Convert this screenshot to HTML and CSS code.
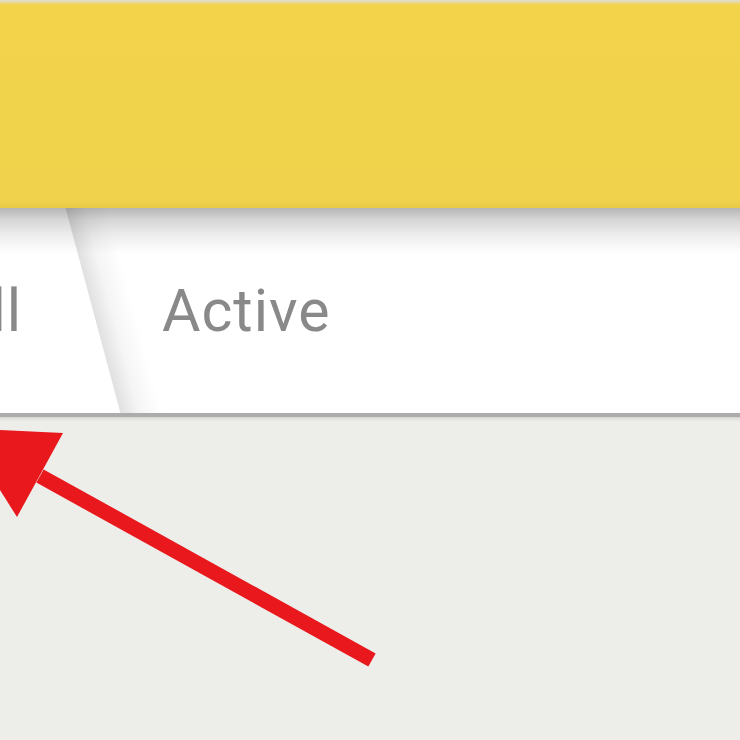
FILE: index.html
```html
<!DOCTYPE html>
<html lang="en">
  <head>
    <meta charset="UTF-8">
    <title>Tasks</title>
    <meta name="viewport" content="width=device-width, initial-scale=1">
    <link rel="stylesheet" href="styles.css">
  </head>
  <body>
    <header class="toolbar"></header>

    <nav class="tabs">
      <div class="tab tab-all">All</div>
      <div class="tab tab-active">Active</div>
    </nav>

    <main class="content"></main>

    <!-- annotation arrow drawn over the screenshot -->
    <svg class="arrow" width="740" height="740" viewBox="0 0 740 740">
      <line x1="372" y1="660" x2="40" y2="476" stroke="#e8181c" stroke-width="15"/>
      <polygon points="63,433 17,517 -39,428" fill="#e8181c"/>
    </svg>
  </body>
</html>
```

FILE: styles.css
```css
body {
  margin: 0;
  background: #ededea;
  font-family: Roboto, "Noto Sans", sans-serif;
  min-height: 740px;
  overflow: hidden;
}

.toolbar {
  height: 208px;
  background: linear-gradient(#e0ded6 0, #e8d9a0 2px, #f2d34a 5px, #f0d24c 200px, #e9ca48 208px);
}

.tabs {
  position: relative;
  display: flex;
  align-items: center;
  height: 205px;
  background: white;
  border-bottom: 4px solid #acacac;
  box-shadow: 0 1px 0 #d6d6d4, 0 3px 2px rgba(0, 0, 0, 0.06);
  overflow: hidden;
}

/* soft shadow from the toolbar above */
.tabs::before {
  content: "";
  position: absolute;
  top: 0;
  left: 0;
  right: 0;
  height: 46px;
  background: linear-gradient(rgba(0, 0, 0, 0.29), rgba(0, 0, 0, 0.16) 12px, rgba(0, 0, 0, 0.07) 27px, rgba(0, 0, 0, 0));
  z-index: 2;
}

.tab {
  font-size: 59px;
  letter-spacing: 1px;
  color: #898989;
  white-space: nowrap;
}

.tab-all {
  position: relative;
  align-self: stretch;
  display: flex;
  align-items: center;
  width: 141px;
  margin-left: -48px;
  flex-shrink: 0;
}

/* slanted divider shadow between tabs */
.tab-all::after {
  content: "";
  position: absolute;
  top: 0;
  bottom: 0;
  left: 100%;
  width: 42px;
  transform: skewX(15deg);
  background: linear-gradient(to right, rgba(0, 0, 0, 0.12), rgba(0, 0, 0, 0.04) 45%, rgba(0, 0, 0, 0));
}

.tab-active {
  padding-left: 69px;
}

.content {
  height: 320px;
}

.arrow {
  position: absolute;
  top: 0;
  left: 0;
  pointer-events: none;
}
```
